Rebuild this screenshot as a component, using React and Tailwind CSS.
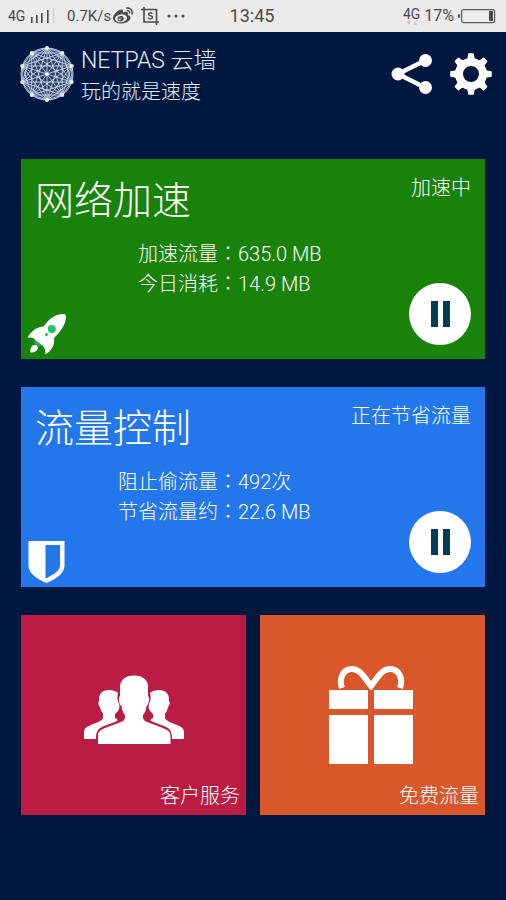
import React from "react";
import { FaWeibo } from "react-icons/fa";

const LOGO_POINTS = Array.from({ length: 10 }, (_, i) => {
  const a = (i * Math.PI) / 5 - Math.PI / 2;
  return [28 + 26 * Math.cos(a), 28 + 26 * Math.sin(a)];
});

function Logo() {
  const lines = [];
  LOGO_POINTS.forEach((p, i) => {
    LOGO_POINTS.slice(i + 1).forEach((q, j) => {
      lines.push(<line key={`${i}-${j}`} x1={p[0]} y1={p[1]} x2={q[0]} y2={q[1]} />);
    });
  });
  return (
    <svg viewBox="0 0 56 56" className="mt-px size-14 shrink-0" role="img" aria-label="NETPAS">
      <circle cx="28" cy="28" r="26" fill="#8fa6cf" fillOpacity="0.28" stroke="#b9c9e6" strokeWidth="1" />
      <g stroke="#dbe6fa" strokeWidth="0.9" strokeOpacity="0.9">{lines}</g>
      {LOGO_POINTS.map((p, i) => (
        <circle key={i} cx={p[0]} cy={p[1]} r="2" fill="#e4f0ff" />
      ))}
      <circle cx="28" cy="28" r="1.8" fill="#fff" />
    </svg>
  );
}

function StatusBar() {
  return (
    <div className="grid h-8 grid-cols-[1fr_auto_1fr] items-center bg-[#ebebeb] pr-[10px] pl-2 text-[#4a4a4a]">
      <div className="flex items-center">
        <span className="w-5 text-sm">4G</span>
        <svg viewBox="0 0 28 16" className="h-4 w-7" fill="#4a4a4a">
          <rect x="3" y="9" width="1.6" height="6" />
          <rect x="8" y="7" width="1.6" height="8" />
          <rect x="13" y="5" width="1.6" height="10" />
          <rect x="19" y="2" width="1.6" height="13" />
          <rect x="25" y="0" width="1.4" height="15" fill="#d2d2d2" />
        </svg>
        <span className="ml-[11px] text-[15px]">0.7K/s</span>
        <FaWeibo className="ml-[2px] size-5" />
        <svg viewBox="0 0 18 18" className="ml-2 size-[18px]" fill="none" stroke="#4a4a4a" strokeWidth="1.6">
          <path d="M0 2.5H15.5V18M3 0V15H18" />
          <path d="M11.5 6.6C10.6 5.5 7.4 5.4 7.4 7.3C7.4 9.3 11.6 8.1 11.6 10.3C11.6 12.3 8 12.2 7 10.9" strokeWidth="1.4" />
        </svg>
        <svg viewBox="0 0 18 4" className="ml-2 h-1 w-[18px]" fill="#4a4a4a">
          <circle cx="2" cy="2" r="1.6" />
          <circle cx="9" cy="2" r="1.6" />
          <circle cx="16" cy="2" r="1.6" />
        </svg>
      </div>
      <time className="text-lg">13:45</time>
      <div className="flex items-center justify-end">
        <div className="flex flex-col items-center">
          <span className="text-sm leading-[14px]">4G</span>
          <svg viewBox="0 0 12 4" className="h-1 w-3" fill="#c4c4c4">
            <path d="M1 0H5L3 4ZM7 4H11L9 0Z" />
          </svg>
        </div>
        <span className="ml-1 text-base">17%</span>
        <svg viewBox="0 0 38 16" className="ml-1 h-4 w-[38px]">
          <rect x="0" y="6" width="2" height="4" rx="1" fill="#4a4a4a" />
          <rect x="3.6" y="1.6" width="33" height="13" rx="2" fill="none" stroke="#5a5a5a" strokeWidth="1.2" />
          <rect x="31" y="3" width="4" height="10" fill="#4a4a4a" />
        </svg>
      </div>
    </div>
  );
}

function ShareIcon() {
  return (
    <svg viewBox="0 0 42 42" className="size-[42px]" fill="#fff">
      <path d="M35 7L7 21L35 35" fill="none" stroke="#fff" strokeWidth="4.5" />
      <circle cx="7" cy="21" r="6.5" />
      <circle cx="34.5" cy="7.5" r="6.5" />
      <circle cx="34.5" cy="34.5" r="6.5" />
    </svg>
  );
}

function GearIcon() {
  return (
    <svg viewBox="0 0 42 42" className="size-[42px]" fill="#fff">
      <circle cx="21" cy="21" r="12" fill="none" stroke="#fff" strokeWidth="8" />
      {[0, 45, 90, 135, 180, 225, 270, 315].map((a) => (
        <path key={a} transform={`rotate(${a} 21 21)`} d="M16 7.500Q18 5.500 18 1.500Q18 0.200 19 0.200H23Q24 0.200 24 1.500Q24 5.500 26 7.500Z" />
      ))}
    </svg>
  );
}

function RocketIcon() {
  return (
    <svg viewBox="0 0 40 42" className="h-[42px] w-10" fill="#fff">
      <path d="M8 26L15 32L11 34L7 30Z" fill="#1fae62" />
      <path d="M38.500 1.500C33 0 26 3 21 8L16.500 13.500C10 14 4 18 0.500 25C4 24 7 25 9 27.500L16 33C18 35 18.500 38 18.500 41.500C25 37 28 32 27 25C33 19 40.500 10 38.500 1.500Z" />
      <path d="M5 33C7 31 11 32 11 35C10.500 38 7 40 3.500 39.500C3 37 3.500 35 5 33Z" />
      <circle cx="24.800" cy="16" r="4" fill="#27bd70" />
      <circle cx="19.500" cy="21.500" r="1.600" fill="#27bd70" />
    </svg>
  );
}

function ShieldIcon() {
  return (
    <svg viewBox="0 0 40 42" className="h-[42px] w-10" fill="#fff">
      <path fillRule="evenodd" d="M1.500 0H37.500V25C37.500 32 29 38 19.500 42C10 38 1.500 32 1.500 25ZM18.500 4V37.500C26 34 33 30 33 24V4Z" />
    </svg>
  );
}

const SIDE_PERSON =
  "M26 15C19 15 15.500 19 16 26C14.800 27 15.500 31 17 32C17.500 35 18.500 37 20 38.500V43C19 46 14 47.500 8 50C3 52 1 54 1 57V64H13C13 56 15 53.500 21 51L33 46.500C35 45.500 34.500 45 34 44L32 43V39L35 36C36 34 37 32 36 29C34 25 34 22 35 18C33 16 29 15 26 15Z";

function PeopleIcon() {
  return (
    <svg viewBox="0 0 102 80" className="h-20 w-[102px]" fill="#fff">
      <path d={SIDE_PERSON} />
      <path transform="translate(102 0) scale(-1 1)" d={SIDE_PERSON} />
      <path d="M51 0.500C60 0.500 66 5 65 14V21C67 22 66 30 63.500 31C63 35 62 38 60 40V43C60.500 45 62 46 64 47L80 53C86 55.500 87.500 57 87.500 62V69H15V62C15 57 16 55.500 22 53L38 47C40 46 41.500 45 42 43V40C40 38 39 35 38.500 31C36 30 35 22 37 21V14C36.500 5 42 0.500 51 0.500Z" />
    </svg>
  );
}

function GiftIcon() {
  return (
    <svg viewBox="0 0 90 100" className="h-[100px] w-[90px]" fill="#fff">
      <path d="M14 23C11 15 14 4 24 4C33 4 37 14 43 21C49 14 53 4 62 4C72 4 75 15 72 23" fill="none" stroke="#fff" strokeWidth="6" />
      <rect x="1" y="25" width="39" height="19" />
      <rect x="46" y="25" width="39" height="19" />
      <rect x="1" y="50" width="39" height="49" />
      <rect x="46" y="50" width="39" height="49" />
    </svg>
  );
}

function Card({ title, status, rows, icon, color }) {
  return (
    <section className={`flex h-[200px] flex-col ${color}`}>
      <div className="flex items-start justify-between px-[14px] pt-3">
        <h2 className="text-[39px] leading-[60px]">{title}</h2>
        <p className="pt-1 text-xl leading-[26px]">{status}</p>
      </div>
      <div className="flex flex-1 pt-2 pr-[14px] pl-[6px]">
        <div className="self-end pb-1">{icon}</div>
        <dl className="flex-1 text-xl leading-[30px]">
          {rows.map(([label, value]) => (
            <div key={label} className="grid grid-cols-[171px_1fr]">
              <dt className="text-right">
                {label}
                <span className="font-['Noto_Sans_CJK_TC',sans-serif] leading-none">：</span>
              </dt>
              <dd>{value}</dd>
            </div>
          ))}
        </dl>
        <button
          type="button"
          aria-label="暂停"
          className="mb-[14px] flex size-[62px] items-center justify-center gap-[5px] self-end rounded-full bg-white"
        >
          <span className="h-[26px] w-[7px] bg-[#043c55]" />
          <span className="h-[26px] w-[7px] bg-[#043c55]" />
        </button>
      </div>
    </section>
  );
}

function Tile({ label, icon, color }) {
  return (
    <button type="button" className={`flex h-[200px] flex-col items-center ${color}`}>
      <span className="flex flex-1 items-center pt-8">{icon}</span>
      <span className="self-end px-[6px] pb-[6px] text-xl leading-[26px]">{label}</span>
    </button>
  );
}

export default function App() {
  return (
    <div className="min-h-screen bg-[#001840] font-[Roboto,'Noto_Sans_CJK_SC',sans-serif]">
      <StatusBar />
      <header className="flex items-start justify-between pt-[13px] pr-[14px] pl-[19px] text-[#e2ecfa]">
        <div className="flex items-start gap-[6px]">
          <Logo />
          <div className="font-light">
            <h1 className="text-[23px] leading-8">NETPAS 云墙</h1>
            <p className="text-xl leading-[30px]">玩的就是速度</p>
          </div>
        </div>
        <div className="flex gap-[17px] pt-2">
          <button type="button" aria-label="分享"><ShareIcon /></button>
          <button type="button" aria-label="设置"><GearIcon /></button>
        </div>
      </header>
      <main className="flex flex-col gap-7 px-[21px] pt-[52px] pb-7 font-light text-white">
        <Card
          title="网络加速"
          status="加速中"
          rows={[["加速流量", "635.0 MB"], ["今日消耗", "14.9 MB"]]}
          icon={<RocketIcon />}
          color="bg-[#18820a]"
        />
        <Card
          title="流量控制"
          status="正在节省流量"
          rows={[["阻止偷流量", "492次"], ["节省流量约", "22.6 MB"]]}
          icon={<ShieldIcon />}
          color="bg-[#2377eb]"
        />
        <div className="grid grid-cols-2 gap-[14px]">
          <Tile label="客户服务" icon={<PeopleIcon />} color="bg-[#bb1c43]" />
          <Tile label="免费流量" icon={<GiftIcon />} color="bg-[#d9572b]" />
        </div>
      </main>
    </div>
  );
}
